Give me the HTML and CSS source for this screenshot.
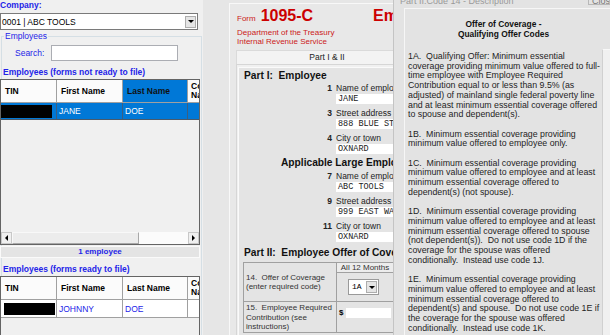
FILE: index.html
```html
<!DOCTYPE html>
<html lang="en">
<head>
  <meta charset="UTF-8">
  <title>1095-C Employee Forms</title>
  <link rel="stylesheet" href="styles.css">
</head>
<body>
  <div class="app">

    <div class="left">
      <div class="company-label">Company:</div>
      <div class="combo">
        <span>0001 | ABC TOOLS</span>
        <span class="combo-btn"><i class="arrow"></i></span>
      </div>

      <fieldset class="group">
        <legend>Employees</legend>
        <div class="search-row">
          <label>Search:</label>
          <div class="textbox"></div>
        </div>

        <div class="grid-title">Employees (forms not ready to file)</div>
        <div class="grid grid-pending">
          <div class="grid-head">
            <div class="cell c-tin">TIN</div>
            <div class="cell c-first">First Name</div>
            <div class="cell c-last sorted">Last Name</div>
            <div class="cell c-co">Company Name</div>
          </div>
          <div class="grid-row selected">
            <div class="cell c-tin"><span class="redacted"></span></div>
            <div class="cell c-first">JANE</div>
            <div class="cell c-last">DOE</div>
            <div class="cell c-co"></div>
          </div>
          <div class="grid-space"></div>
          <div class="hscroll">
            <div class="sb-btn"><i class="arrow-left"></i></div>
            <div class="sb-thumb"></div>
            <div class="sb-track"></div>
            <div class="sb-btn"><i class="arrow-right"></i></div>
          </div>
        </div>
        <div class="count">1 employee</div>

        <div class="grid-title ready-title">Employees (forms ready to file)</div>
        <div class="grid grid-ready">
          <div class="grid-head">
            <div class="cell c-tin">TIN</div>
            <div class="cell c-first">First Name</div>
            <div class="cell c-last">Last Name</div>
            <div class="cell c-co">Company Name</div>
          </div>
          <div class="grid-row">
            <div class="cell c-tin"><span class="redacted wide"></span></div>
            <div class="cell c-first">JOHNNY</div>
            <div class="cell c-last">DOE</div>
            <div class="cell c-co"></div>
          </div>
        </div>
      </fieldset>
    </div>

    <div class="form-area">
      <div class="form-panel">
        <div class="form-head">
          <div class="form-id">
            <div class="form-number"><span class="form-word">Form</span>1095-C</div>
            <div class="form-dept">Department of the Treasury</div>
            <div class="form-dept">Internal Revenue Service</div>
          </div>
          <div class="form-title">Employer-Provided Health Insurance Offer and Coverage</div>
        </div>

        <div class="tab-strip">Part I &amp; II</div>
        <div class="tab-page">
          <div class="part-panel">
            <div class="part-heading">Part I:&nbsp; Employee</div>

            <div class="field first">
              <span class="num">1</span><span class="label">Name of employee</span>
              <div class="entry">JANE</div>
            </div>
            <div class="field">
              <span class="num">3</span><span class="label">Street address (including apartment no.)</span>
              <div class="entry">888 BLUE STREET</div>
            </div>
            <div class="field">
              <span class="num">4</span><span class="label">City or town</span>
              <div class="entry">OXNARD</div>
            </div>

            <div class="sub-heading">Applicable Large Employer Member (Employer)</div>

            <div class="field first">
              <span class="num">7</span><span class="label">Name of employer</span>
              <div class="entry">ABC TOOLS</div>
            </div>
            <div class="field">
              <span class="num">9</span><span class="label">Street address (including room or suite no.)</span>
              <div class="entry">999 EAST WAY</div>
            </div>
            <div class="field">
              <span class="num">11</span><span class="label">City or town</span>
              <div class="entry">OXNARD</div>
            </div>

            <div class="part-heading part-two">Part II:&nbsp; Employee Offer of Coverage</div>

            <table class="offer-table">
              <tr>
                <td class="row-label" rowspan="2">14.&nbsp; Offer of Coverage<br>(enter required code)</td>
                <td class="months">All 12 Months</td>
              </tr>
              <tr>
                <td class="code-cell">
                  <div class="mini-combo"><span>1A</span><span class="combo-btn"><i class="arrow"></i></span></div>
                </td>
              </tr>
              <tr>
                <td class="row-label tall">15.&nbsp; Employee Required<br>Contribution (see<br>instructions)</td>
                <td class="amount-cell"><span class="dollar">$</span><span class="amount"></span></td>
              </tr>
            </table>
          </div>
        </div>
      </div>
    </div>

    <div class="dialog">
      <div class="dialog-title">
        <span>Part II:Code 14 - Description</span>
        <span class="title-btn">Close</span>
      </div>
      <div class="dialog-body">
        <div class="codes-heading">Offer of Coverage -<br>Qualifying Offer Codes</div>
        <div class="codes-box">
          <div class="codes-text">
            <p>1A.  Qualifying Offer: Minimum essential<br>coverage providing minimum value offered to full-<br>time employee with Employee Required<br>Contribution equal to or less than 9.5% (as<br>adjusted) of mainland single federal poverty line<br>and at least minimum essential coverage offered<br>to spouse and dependent(s).</p>
            <p>1B.  Minimum essential coverage providing<br>minimum value offered to employee only.</p>
            <p>1C.  Minimum essential coverage providing<br>minimum value offered to employee and at least<br>minimum essential coverage offered to<br>dependent(s) (not spouse).</p>
            <p>1D.  Minimum essential coverage providing<br>minimum value offered to employee and at least<br>minimum essential coverage offered to spouse<br>(not dependent(s)).  Do not use code 1D if the<br>coverage for the spouse was offered<br>conditionally.  Instead use code 1J.</p>
            <p>1E.  Minimum essential coverage providing<br>minimum value offered to employee and at least<br>minimum essential coverage offered to<br>dependent(s) and spouse.  Do not use code 1E if<br>the coverage for the spouse was offered<br>conditionally.  Instead use code 1K.</p>
          </div>
          <div class="vscroll"></div>
        </div>
      </div>
    </div>

  </div>
</body>
</html>
```

FILE: styles.css
```css
* {
  box-sizing: border-box;
}
body {
  margin: 0;
  font-family: "Liberation Sans", Arial, sans-serif;
  font-size: 8.5px;
  color: #000;
  background-color: #f0f0f0;
}
.app {
  display: flex;
  width: 610px;
  height: 335px;
  overflow: hidden;
}

/* left: employee lists */
.left {
  width: 203px;
  flex: none;
  background-color: #f0f0f0;
}
.company-label {
  font-weight: bold;
  color: #2424e8;
  line-height: 11px;
  height: 11px;
}
.combo {
  margin-top: 2px;
  width: 198px;
  height: 17px;
  border: 1px solid #7a7a7a;
  background-color: #fff;
  display: flex;
  align-items: center;
  justify-content: space-between;
  padding-left: 1px;
}
.combo-btn {
  width: 11px;
  height: 12px;
  margin-right: 1px;
  border: 1px solid #adadad;
  background-color: #e5e5e5;
  display: flex;
  align-items: center;
  justify-content: center;
}
.arrow {
  border-left: 3px solid transparent;
  border-right: 3px solid transparent;
  border-top: 3px solid #000;
}
.group {
  margin: 1px 0 0 1px;
  padding: 0;
  width: 201px;
  min-width: 0;
  border: 1px solid #d5dfe5;
  border-bottom: none;
}
.group legend {
  margin-left: 2px;
  padding: 0 1px;
  color: #2424e8;
  line-height: 11px;
}
.search-row {
  display: flex;
  align-items: center;
  margin-top: 3px;
  padding-left: 13px;
}
.search-row label {
  width: 36px;
  color: #2424e8;
}
.textbox {
  width: 127px;
  height: 16px;
  border: 1px solid #abadb3;
  background-color: #fff;
}
.grid-title {
  margin-top: 6px;
  padding-left: 1px;
  font-weight: bold;
  color: #2424e8;
  line-height: 10px;
}
.ready-title {
  margin-top: 6px;
}
.grid {
  margin: 2px 0 0 -2px;
  width: 200px;
  border: 1px solid #646464;
  background-color: #f0f0f0;
  display: flex;
  flex-direction: column;
  overflow: hidden;
}
.grid-pending {
  height: 166px;
}
.grid-ready {
  height: 70px;
}
.grid-head,
.grid-row {
  display: flex;
  flex: none;
}
.grid-head {
  height: 23px;
  border-bottom: 1px solid #a0a0a0;
}
.grid-head .cell {
  background-color: #fbfbfb;
  font-weight: bold;
  padding-left: 4px;
  display: flex;
  align-items: center;
  border-right: 1px solid #a0a0a0;
}
.grid-head .sorted {
  background-color: #0078d7;
  color: #111;
}
.grid-head .c-co {
  line-height: 9px;
  padding-left: 3px;
  padding-right: 24px;
}
.grid-row {
  height: 18px;
  background-color: #fff;
  border-bottom: 1px solid #a0a0a0;
}
.grid-row .cell {
  padding-left: 2px;
  display: flex;
  align-items: center;
  border-right: 1px solid #a0a0a0;
  color: #2424e8;
}
.grid-row.selected {
  height: 17px;
  background-color: #0078d7;
  border-bottom-color: #4a5a6a;
}
.grid-row.selected .cell {
  color: #fff;
  border-right-color: #3c5f80;
}
.cell {
  flex: none;
  overflow: hidden;
  white-space: nowrap;
}
.c-tin {
  width: 56px;
}
.c-first {
  width: 66px;
}
.c-last {
  width: 65px;
}
.c-co {
  width: 64px;
}
.grid-head .c-co {
  white-space: normal;
}
.grid-row .c-tin {
  padding-left: 0;
}
.redacted {
  width: 51px;
  height: 13px;
  background-color: #000;
}
.redacted.wide {
  margin-left: 3px;
  height: 12px;
}
.grid-space {
  flex: 1;
}
.hscroll {
  height: 12px;
  display: flex;
  flex: none;
}
.sb-btn {
  width: 11px;
  background-color: #f0f0f0;
  border: 1px solid #c8c8c8;
  display: flex;
  align-items: center;
  justify-content: center;
}
.arrow-left {
  border-top: 3px solid transparent;
  border-bottom: 3px solid transparent;
  border-right: 3px solid #000;
}
.arrow-right {
  border-top: 3px solid transparent;
  border-bottom: 3px solid transparent;
  border-left: 3px solid #000;
}
.sb-thumb {
  width: 127px;
  background-color: #ececec;
  border: 1px solid #a8a8a8;
  border-top-color: #f8f8f8;
  border-left-color: #f8f8f8;
}
.sb-track {
  flex: 1;
  background-color: #fbfbfb;
}
.count {
  margin: 1px 0 0 -2px;
  width: 200px;
  height: 12px;
  border: 1px solid #fafafa;
  background-color: #e4e4e4;
  text-align: center;
  font-size: 8px;
  font-weight: bold;
  color: #2424e8;
  line-height: 10px;
}

/* middle: 1095-C form */
.form-area {
  width: 190px;
  flex: none;
  background-color: #e6e6e6;
  overflow: hidden;
  padding: 3px 0 0 26px;
}
.form-panel {
  width: 420px;
  height: 340px;
  border-top: 1px solid #f8f8f8;
  border-left: 1px solid #f8f8f8;
  background-color: #e8e8e8;
  padding: 3px 0 0 7px;
}
.form-head {
  display: flex;
  color: #cc1a1a;
}
.form-id {
  width: 136px;
  flex: none;
}
.form-number {
  font-size: 16px;
  font-weight: bold;
  line-height: 18px;
  color: #cc0000;
}
.form-word {
  font-size: 8px;
  font-weight: normal;
  margin-right: 5px;
  color: #cc1a1a;
}
.form-dept {
  font-size: 8px;
  line-height: 9px;
}
.form-title {
  font-size: 16px;
  font-weight: bold;
  line-height: 18px;
  white-space: nowrap;
  color: #cc0000;
}
.tab-strip {
  margin: 4px 0 0 -1px;
  width: 182px;
  height: 14px;
  border: 1px solid #dadada;
  border-bottom: none;
  background-color: #f3f3f3;
  text-align: center;
  line-height: 13px;
  color: #222;
}
.tab-page {
  margin-left: -1px;
  border: 1px solid #d6d6d6;
  background-color: #f0f0f0;
  padding: 2px 0 0 1px;
}
.part-panel {
  height: 290px;
  background-color: #e4e4e4;
  border-top: 1px solid #fafafa;
  border-left: 1px solid #fafafa;
  padding: 2px 0 0 5px;
  color: #222;
}
.part-heading,
.sub-heading {
  font-size: 10.2px;
  font-weight: bold;
  line-height: 12px;
  color: #111;
  white-space: nowrap;
}
.sub-heading {
  margin-top: 3px;
  padding-left: 37px;
}
.part-two {
  margin-top: 5px;
}
.field {
  display: grid;
  grid-template-columns: 88px 200px;
  column-gap: 4px;
  line-height: 10px;
  margin-top: 4px;
}
.field.first {
  margin-top: 1px;
}
.sub-heading + .field.first {
  margin-top: 2px;
}
.num {
  text-align: right;
  font-weight: bold;
}
.label {
  white-space: nowrap;
}
.entry {
  grid-column: 2;
  margin-top: 1px;
  height: 10px;
  background-color: #fff;
  font-family: "Liberation Mono", "Courier New", monospace;
  font-size: 8.5px;
  line-height: 10px;
  padding-left: 2px;
  white-space: nowrap;
}
.offer-table {
  margin: 3px 0 0 -1px;
  border-collapse: collapse;
  font-size: 8px;
  line-height: 9.5px;
  color: #333;
}
.offer-table td {
  border: 1px solid #a0a0a0;
  padding: 0;
}
.row-label {
  width: 93px;
  padding-left: 2px !important;
  vertical-align: middle;
}
.row-label.tall {
  height: 28px;
  vertical-align: top;
  padding-top: 1px !important;
}
.months {
  width: 57px;
  height: 10px;
  text-align: center;
  line-height: 9px;
  background-color: #ececec;
}
.code-cell {
  height: 29px;
}
.mini-combo {
  margin-left: 11px;
  width: 31px;
  height: 16px;
  background-color: #fff;
  border: 1px solid #9a9a9a;
  display: flex;
  align-items: center;
  justify-content: space-between;
  padding-left: 3px;
  font-family: "Liberation Mono", "Courier New", monospace;
  color: #000;
}
.mini-combo .combo-btn {
  height: 12px;
}
.amount-cell {
  vertical-align: top;
  padding-top: 6px !important;
}
.amount-cell .dollar {
  display: inline-block;
  width: 9px;
  padding-left: 2px;
  color: #000;
  font-weight: bold;
}
.amount {
  display: inline-block;
  vertical-align: top;
  width: 45px;
  height: 10px;
  background-color: #fff;
}

/* right: code description dialog */
.dialog {
  width: 217px;
  flex: none;
  background-color: #e3e3e3;
  border-left: 1px solid #c4c4c4;
  display: flex;
  flex-direction: column;
}
.dialog-title {
  height: 8px;
  flex: none;
  display: flex;
  justify-content: space-between;
  padding-left: 6px;
  font-size: 9px;
  line-height: 3px;
  color: #9a9a9a;
  overflow: hidden;
}
.title-btn {
  width: 22px;
  height: 5px;
  border: 1px solid #b8b8b8;
  border-top: none;
  padding-left: 3px;
  overflow: hidden;
  color: #777;
}
.dialog-body {
  flex: 1;
  margin-left: 10px;
  border-top: 1px solid #f6f6f6;
  border-left: 1px solid #f6f6f6;
  padding-top: 10px;
  color: #1e1e1e;
}
.codes-heading {
  width: 197px;
  text-align: center;
  font-weight: bold;
  font-size: 8.4px;
  line-height: 10px;
  color: #111;
}
.codes-box {
  margin-top: 10px;
  display: flex;
  height: 300px;
}
.codes-text {
  width: 197px;
  flex: none;
  padding: 3px 0 0 3px;
  font-size: 8.8px;
  line-height: 9.7px;
}
.codes-text p {
  margin: 0 0 9.7px;
  white-space: pre;
}
.vscroll {
  width: 17px;
  flex: none;
  background-color: #f0f0f0;
  border-left: 1px solid #d0d0d0;
  border-top: 1px solid #f8f8f8;
}
```
